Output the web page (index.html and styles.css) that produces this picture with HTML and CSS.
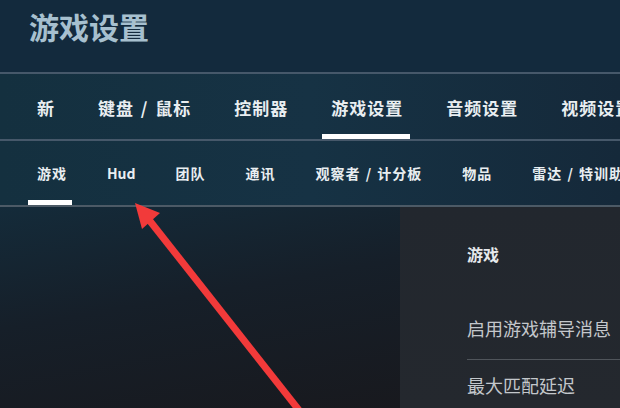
FILE: index.html
```html
<!DOCTYPE html>
<html lang="zh-CN">
<head>
  <meta charset="UTF-8">
  <title>游戏设置</title>
  <link rel="stylesheet" href="styles.css">
</head>
<body>
  <div class="header">
    <h1>游戏设置</h1>
  </div>

  <nav class="main-tabs">
    <span class="tab">新</span>
    <span class="tab">键盘 / 鼠标</span>
    <span class="tab">控制器</span>
    <span class="tab active">游戏设置</span>
    <span class="tab">音频设置</span>
    <span class="tab">视频设置</span>
  </nav>

  <nav class="sub-tabs">
    <span class="tab active">游戏</span>
    <span class="tab latin">Hud</span>
    <span class="tab">团队</span>
    <span class="tab">通讯</span>
    <span class="tab">观察者 / 计分板</span>
    <span class="tab">物品</span>
    <span class="tab">雷达 / 特训助手</span>
  </nav>

  <div class="content">
    <div class="preview"></div>
    <div class="panel">
      <h3>游戏</h3>
      <div class="setting-row">启用游戏辅导消息</div>
      <div class="setting-row">最大匹配延迟</div>
    </div>
  </div>

  <!-- 标注箭头 -->
  <svg class="arrow" width="620" height="408" viewBox="0 0 620 408">
    <line x1="146" y1="216" x2="302" y2="414" stroke="#f23a3a" stroke-width="7"/>
    <polygon points="135,203 160,213 142,229" fill="#f23a3a"/>
  </svg>
</body>
</html>
```

FILE: styles.css
```css
body {
  margin: 0;
  width: 620px;
  height: 408px;
  overflow: hidden;
  position: relative;
  font-family: "Noto Sans CJK SC", "Noto Sans", sans-serif;
  background: #132a3d;
  color: #e9eef1;
}

.header {
  height: 72px;
  padding-left: 29px;
  border-bottom: 2px solid #46586a;
}

.header h1 {
  margin: 0;
  padding-top: 11px;
  font-size: 30px;
  line-height: 30px;
  font-weight: 700;
  color: #a7c0cf;
}

.main-tabs, .sub-tabs {
  display: flex;
  white-space: nowrap;
  overflow: hidden;
  background: linear-gradient(90deg, #14303f, #163244 50%, #15293a);
}

.main-tabs {
  height: 65px;
  padding-left: 28px;
  gap: 25px;
  border-bottom: 2px solid #46586a;
}

.main-tabs .tab {
  padding: 24px 9px 0;
  font-size: 17px;
  line-height: 20px;
  font-weight: 700;
  letter-spacing: 1px;
  word-spacing: 2px;
  border-bottom: 5px solid transparent;
}

.main-tabs .tab.active {
  border-bottom-color: #ffffff;
  height: 36px;
  padding-right: 7px;
  margin-right: 2px;
}

.sub-tabs {
  height: 64px;
  padding-left: 28px;
  gap: 22px;
  border-bottom: 2px solid #4c5a66;
}

.sub-tabs .tab {
  padding: 23px 9px 0;
  font-size: 14px;
  line-height: 18px;
  font-weight: 700;
  letter-spacing: 1px;
  word-spacing: 1px;
  border-bottom: 5px solid transparent;
  height: 36px;
}

.sub-tabs .tab.latin {
  letter-spacing: 0;
}

.sub-tabs .tab.active {
  border-bottom-color: #ffffff;
  padding-right: 5px;
  margin-right: 4px;
}

.content {
  display: flex;
  height: 201px;
}

.preview {
  flex: 1;
  background: linear-gradient(170deg, #142b3a 0%, #161f29 45%, #18191e 100%);
}

.panel {
  width: 153px;
  padding: 37px 0 0 67px;
  background: linear-gradient(180deg, #22272e, #24282e);
}

.panel h3 {
  margin: 0 0 39px 0;
  font-size: 16px;
  line-height: 20px;
  font-weight: 700;
  color: #e6e9ec;
}

.setting-row {
  padding: 13px 0 19px;
  font-size: 18px;
  line-height: 24px;
  color: #c3c7cb;
  white-space: nowrap;
  border-bottom: 1px solid #50555b;
}

.setting-row:last-child {
  border-bottom: none;
}

.arrow {
  position: absolute;
  left: 0;
  top: 0;
}
```
